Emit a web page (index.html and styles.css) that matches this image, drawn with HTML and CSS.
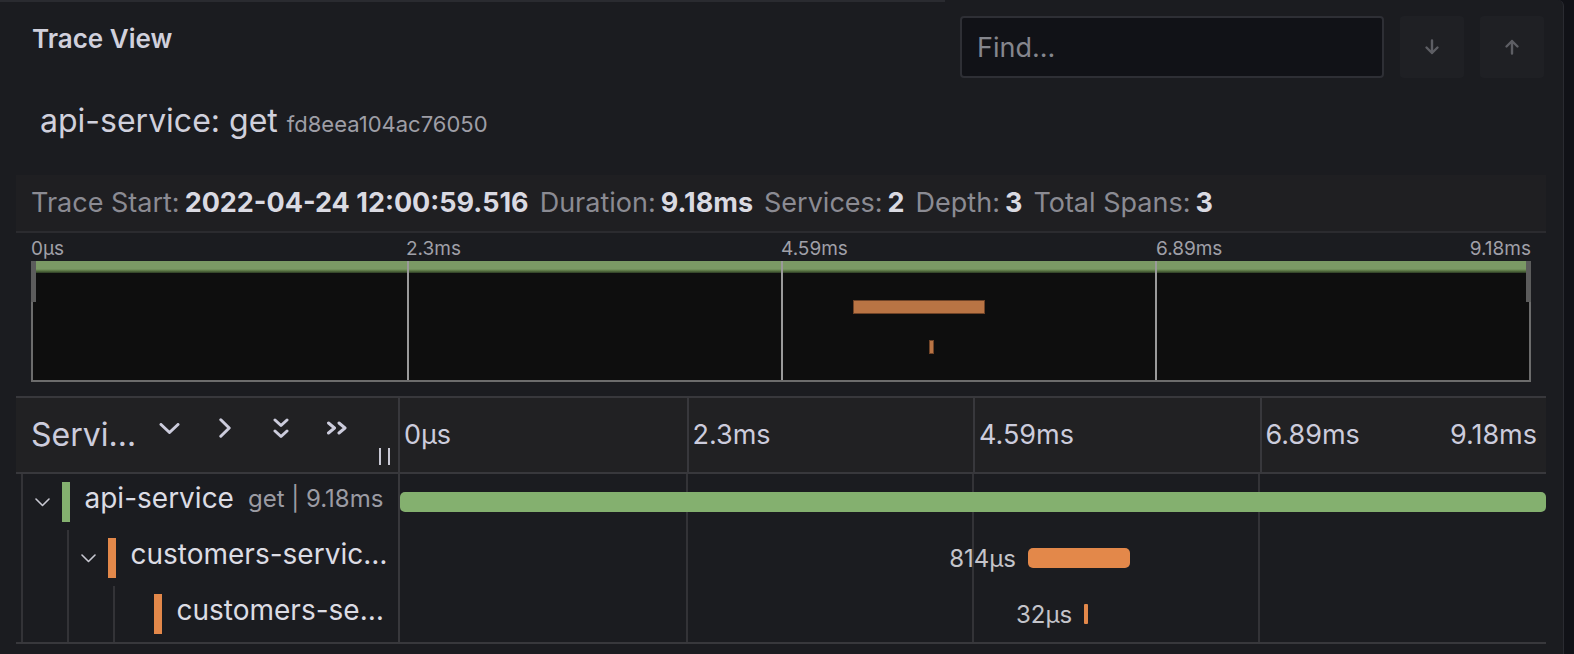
FILE: index.html
```html
<!DOCTYPE html>
<html lang="en">
<head>
<meta charset="utf-8">
<title>Trace View</title>
<link rel="stylesheet" href="styles.css">
</head>
<body>
<div class="panel">
  <div class="topline"></div>
  <div class="head">
    <div class="panel-title">Trace View</div>
    <div class="find">
      <input class="find-input" type="text" placeholder="Find...">
      <button class="nav-btn" type="button" aria-label="Next">
        <svg width="18" height="16" viewBox="0 0 18 16"><path d="M9 1.5V14M3.5 8.5L9 14l5.5-5.5" fill="none" stroke="currentColor" stroke-width="2.4" stroke-linecap="round" stroke-linejoin="round"/></svg>
      </button>
      <button class="nav-btn" type="button" aria-label="Previous">
        <svg width="18" height="16" viewBox="0 0 18 16"><path d="M9 14.5V2M3.5 7.5L9 2l5.5 5.5" fill="none" stroke="currentColor" stroke-width="2.4" stroke-linecap="round" stroke-linejoin="round"/></svg>
      </button>
    </div>
  </div>

  <div class="trace-title"><span class="svc">api-service: get</span><span class="tid">fd8eea104ac76050</span></div>

  <div class="summary">
    <span class="item"><span class="lbl">Trace Start:</span><b>2022-04-24 12:00:59.516</b></span>
    <span class="item"><span class="lbl">Duration:</span><b>9.18ms</b></span>
    <span class="item"><span class="lbl">Services:</span><b>2</b></span>
    <span class="item"><span class="lbl">Depth:</span><b>3</b></span>
    <span class="item"><span class="lbl">Total Spans:</span><b>3</b></span>
  </div>

  <div class="minimap">
    <div class="mm-labels">
      <span>0µs</span><span>2.3ms</span><span>4.59ms</span><span class="last"><span>6.89ms</span><span>9.18ms</span></span>
    </div>
    <div class="mm-canvas">
      <div class="mm-root"></div>
      <div class="mm-grid"><i></i><i></i><i></i><i></i></div>
      <div class="mm-span" style="left:54.8%;width:8.87%;top:39px"></div>
      <div class="mm-span" style="left:59.9%;width:0.35%;top:79px"></div>
      <div class="mm-handle left"></div>
      <div class="mm-handle right"></div>
    </div>
  </div>

  <div class="table">
    <div class="thead">
      <div class="th-left">
        <span class="th-name">Servi…</span>
        <span class="th-icon"><svg width="21" height="11" viewBox="0 0 21 11"><polyline points="2,1.5 10.5,9.5 19,1.5" fill="none" stroke="currentColor" stroke-width="3" stroke-linecap="round" stroke-linejoin="round"/></svg></span>
        <span class="th-icon"><svg width="12" height="20" viewBox="0 0 12 20"><polyline points="1.8,1.8 10.2,10 1.8,18.2" fill="none" stroke="currentColor" stroke-width="3" stroke-linecap="round" stroke-linejoin="round"/></svg></span>
        <span class="th-icon"><svg width="16" height="21" viewBox="0 0 16 21"><polyline points="2,2 8,7.5 14,2" fill="none" stroke="currentColor" stroke-width="3" stroke-linecap="round" stroke-linejoin="round"/><polyline points="2,13 8,18.5 14,13" fill="none" stroke="currentColor" stroke-width="3" stroke-linecap="round" stroke-linejoin="round"/></svg></span>
        <span class="th-icon"><svg width="22" height="14" viewBox="0 0 22 14"><polyline points="2.5,2 8.5,7 2.5,12" fill="none" stroke="currentColor" stroke-width="3" stroke-linecap="round" stroke-linejoin="round"/><polyline points="13,2 19,7 13,12" fill="none" stroke="currentColor" stroke-width="3" stroke-linecap="round" stroke-linejoin="round"/></svg></span>
        <span class="resizer"><i></i><i></i></span>
      </div>
      <div class="th-right">
        <span>0µs</span><span>2.3ms</span><span>4.59ms</span><span class="last"><span>6.89ms</span><span>9.18ms</span></span>
      </div>
    </div>

    <div class="row">
      <div class="row-left">
        <span class="guide first"></span>
        <span class="toggle"><svg width="15" height="9" viewBox="0 0 15 9"><polyline points="1,1 7.5,7.5 14,1" fill="none" stroke="currentColor" stroke-width="1.6" stroke-linecap="round" stroke-linejoin="round"/></svg></span>
        <span class="cbar green"></span>
        <span class="name">api-service</span>
        <span class="op">get | 9.18ms</span>
      </div>
      <div class="row-right">
        <div class="sbar green" style="left:0;width:100%"></div>
      </div>
    </div>

    <div class="row">
      <div class="row-left">
        <span class="guide first"></span>
        <span class="guide"></span>
        <span class="toggle"><svg width="15" height="9" viewBox="0 0 15 9"><polyline points="1,1 7.5,7.5 14,1" fill="none" stroke="currentColor" stroke-width="1.6" stroke-linecap="round" stroke-linejoin="round"/></svg></span>
        <span class="cbar orange"></span>
        <span class="name">customers-servic…</span>
      </div>
      <div class="row-right">
        <div class="sbar orange" style="left:54.8%;width:8.87%"><span class="dur">814µs</span></div>
      </div>
    </div>

    <div class="row">
      <div class="row-left">
        <span class="guide first"></span>
        <span class="guide"></span>
        <span class="guide"></span>
        <span class="toggle"></span>
        <span class="cbar orange"></span>
        <span class="name">customers-se…</span>
      </div>
      <div class="row-right">
        <div class="sbar orange thin" style="left:59.7%;width:4px"><span class="dur">32µs</span></div>
      </div>
    </div>
  </div>
</div>
</body>
</html>
```

FILE: styles.css
```css
* { box-sizing: border-box; margin: 0; padding: 0; }

html, body { height: 100%; }

body {
  background: #111217;
  font-family: Inter, "Noto Sans", "DejaVu Sans", sans-serif;
  color: #ccccdc;
  overflow: hidden;
}

.panel {
  width: 1564px;
  height: 654px;
  background: #1b1c20;
  border-right: 1px solid #2a2b31;
  border-top-right-radius: 6px;
  display: flex;
  flex-direction: column;
}

.topline {
  width: 945px;
  height: 2px;
  background: #2a2b30;
  flex: none;
}

/* header */
.head {
  height: 78px;
  flex: none;
  display: flex;
  justify-content: space-between;
  align-items: flex-start;
  padding: 0 19px 0 32px;
}

.panel-title {
  font-size: 26px;
  font-weight: 600;
  line-height: 34px;
  margin-top: 20px;
  color: #d0d0dc;
}

.find {
  display: flex;
  gap: 16px;
  margin-top: 14px;
}

.find-input {
  width: 424px;
  height: 62px;
  background: #111217;
  border: 2px solid #2e2f35;
  border-radius: 4px;
  padding-left: 15px;
  font-family: Inter, "Noto Sans", sans-serif;
  font-size: 27px;
  color: #ccccdc;
  outline: none;
}

.find-input::placeholder { color: #85868d; }

.nav-btn {
  width: 64px;
  height: 62px;
  border: none;
  border-radius: 4px;
  background: #1f2024;
  color: #5d5e64;
  display: flex;
  align-items: center;
  justify-content: center;
}

/* trace title */
.trace-title {
  height: 95px;
  flex: none;
  padding: 21px 0 0 40px;
  line-height: 40px;
  white-space: nowrap;
}

.svc { font-size: 32px; color: #d0d0dc; }

.tid {
  font-size: 22px;
  color: #9e9ea6;
  margin-left: 9px;
}

/* summary */
.summary {
  height: 58px;
  flex: none;
  margin: 0 17px 0 16px;
  background: #1f1f22;
  border-bottom: 2px solid #2b2b2f;
  padding-left: 15px;
  display: flex;
  gap: 11px;
  font-size: 27px;
  line-height: 56px;
  white-space: nowrap;
}

.summary .lbl { color: #8b8b93; margin-right: 5px; }
.summary b { font-weight: 700; color: #dadae2; }

/* minimap */
.minimap {
  flex: none;
  margin: 0 32px 0 31px;
}

.mm-labels {
  height: 28px;
  padding-top: 3px;
  line-height: 25px;
  font-size: 19px;
  color: #a0a0a8;
  display: grid;
  grid-template-columns: repeat(4, 1fr);
}

.last {
  display: flex;
  justify-content: space-between;
}

.mm-canvas {
  position: relative;
  height: 121px;
  background: #0e0e0e;
  border-left: 2px solid #6c6c6c;
  border-right: 2px solid #6c6c6c;
  border-bottom: 2px solid #6c6c6c;
}

.mm-root {
  height: 12px;
  background: linear-gradient(#7b9965 0, #7b9965 8px, #55703f 10px, #2d3b25 12px);
}

.mm-grid {
  position: absolute;
  inset: 0;
  display: grid;
  grid-template-columns: repeat(4, 1fr);
}

.mm-grid i + i { border-left: 2px solid #9a9a9a; }

.mm-span {
  position: absolute;
  height: 14px;
  background: #b97444;
  box-shadow: inset 0 0 0 1px #6f4327;
}

.mm-handle {
  position: absolute;
  top: 0;
  width: 5px;
  height: 41px;
  background: #5c5c5c;
}

.mm-handle.left { left: -2px; }
.mm-handle.right { right: -2px; }

/* table */
.table {
  flex: none;
  margin: 14px 17px 0 16px;
  border-top: 2px solid #38383c;
  border-bottom: 2px solid #38383c;
}

.thead {
  height: 76px;
  display: flex;
  background: #212123;
  border-bottom: 2px solid #38383c;
}

.th-left {
  width: 384px;
  flex: none;
  border-right: 2px solid #38383c;
  display: flex;
  align-items: center;
  padding-left: 15px;
}

.th-name {
  width: 110px;
  font-size: 32px;
  line-height: 74px;
  white-space: nowrap;
  overflow: hidden;
  color: #ccccdc;
}

.th-icon {
  width: 56px;
  height: 24px;
  margin-bottom: 14px;
  display: flex;
  align-items: center;
  justify-content: center;
  color: #ccccdc;
}

.resizer {
  margin-left: auto;
  margin-right: 8px;
  align-self: flex-end;
  margin-bottom: 7px;
  display: flex;
  gap: 7px;
}

.resizer i {
  width: 2px;
  height: 17px;
  background: #c8c8d4;
}

.th-right {
  flex: 1;
  display: grid;
  grid-template-columns: repeat(4, 1fr);
  font-size: 27px;
  line-height: 74px;
  color: #ccccdc;
}

.th-right > span { padding-left: 4px; }
.th-right > span + span { border-left: 2px solid #38383c; }
.th-right .last { padding-right: 9px; }

.row {
  height: 56px;
  display: flex;
}

.row-left {
  width: 384px;
  flex: none;
  border-right: 2px solid #38383c;
  display: flex;
  align-items: center;
  white-space: nowrap;
  overflow: hidden;
}

.guide {
  flex: none;
  width: 46px;
  height: 100%;
  border-right: 2px solid #333337;
}

.guide.first { width: 7px; }

.toggle {
  flex: none;
  width: 39px;
  display: flex;
  justify-content: center;
  color: #c8c8d2;
}

.cbar {
  flex: none;
  width: 7.5px;
  height: 40px;
}

.green { background: #84b06f; }
.orange { background: #e3884a; }

.name {
  margin-left: 15px;
  margin-bottom: 8px;
  font-size: 28px;
  color: #dcdce4;
}

.op {
  margin-left: 14px;
  margin-bottom: 8px;
  font-size: 24px;
  color: #9b9ba3;
}

.row-right {
  flex: 1;
  position: relative;
  background:
    linear-gradient(#333337, #333337) 25% 0 / 2px 100% no-repeat,
    linear-gradient(#333337, #333337) 50% 0 / 2px 100% no-repeat,
    linear-gradient(#333337, #333337) 75% 0 / 2px 100% no-repeat;
}

.sbar {
  position: absolute;
  top: 18px;
  height: 20px;
  border-radius: 5px;
}

.sbar.thin { border-radius: 1px; }

.dur {
  position: absolute;
  right: 100%;
  top: 1px;
  margin-right: 12px;
  font-size: 24px;
  line-height: 20px;
  color: #c4c4ca;
  white-space: nowrap;
}
```
